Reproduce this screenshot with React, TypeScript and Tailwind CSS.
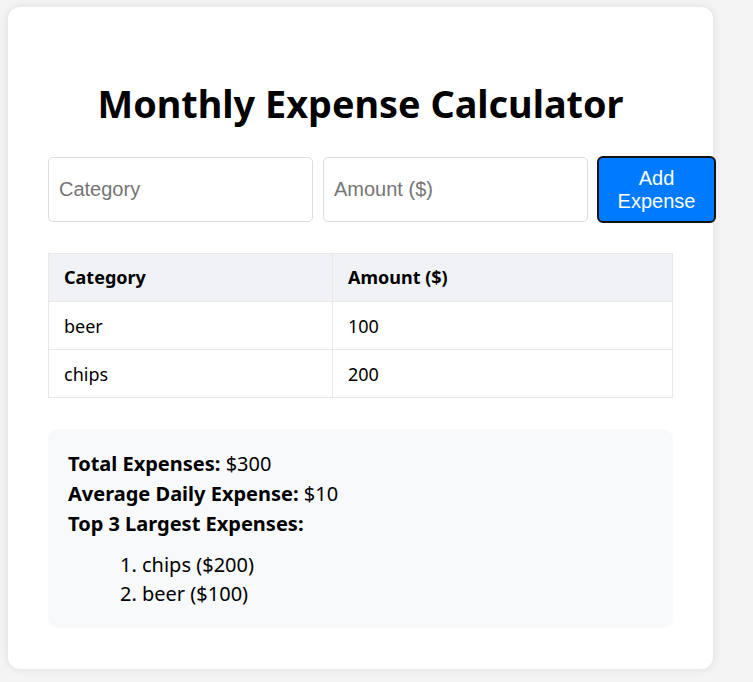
import { useState } from "react";

type Expense = { category: string; amount: number };

const font = { fontFamily: '"Noto Sans", "Open Sans", sans-serif' };

export default function App() {
  const [expenses] = useState<Expense[]>([
    { category: "beer", amount: 100 },
    { category: "chips", amount: 200 },
  ]);
  const total = expenses.reduce((s, e) => s + e.amount, 0);
  const top = [...expenses].sort((a, b) => b.amount - a.amount).slice(0, 3);

  return (
    <div className="min-h-[682px] bg-[#f4f4f4] pl-2 pt-[7px]">
      <div
        className="w-[705px] rounded-xl bg-white px-10 pb-[41px] pt-[40px] text-black shadow-[0_0_10px_rgba(0,0,0,0.1)]"
        style={font}
      >
        <h1 className="mt-[29px] text-center text-[37.8px] font-bold leading-[56px]">
          Monthly Expense Calculator
        </h1>
        <div className="mt-[24px] flex items-center">
          <input
            placeholder="Category"
            className="h-[65px] w-[265px] shrink-0 rounded-[5px] border border-[#dddddd] px-[10px] text-[20px] placeholder:text-[#757575] font-['Liberation_Sans',Arial,sans-serif]"
          />
          <input
            placeholder="Amount ($)"
            className="ml-[10px] h-[65px] w-[265px] shrink-0 rounded-[5px] border border-[#dddddd] px-[10px] text-[20px] placeholder:text-[#757575] font-['Liberation_Sans',Arial,sans-serif]"
          />
          <button className="ml-[9px] h-[67px] w-[119px] shrink-0 rounded-[6px] border-2 border-[#111111] bg-[#007bff] text-[20px] leading-[23px] text-white font-['Liberation_Sans',Arial,sans-serif]">
            Add
            <br />
            Expense
          </button>
        </div>

        <table className="mt-[30px] w-[625px] border-collapse text-[18px]">
          <thead>
            <tr className="bg-[#f0f2f5]">
              <th className="h-[48px] w-[284px] border border-[#e8e8e8] px-[15px] text-left font-bold">
                Category
              </th>
              <th className="h-[48px] border border-[#e8e8e8] px-[15px] text-left font-bold">
                Amount ($)
              </th>
            </tr>
          </thead>
          <tbody>
            {expenses.map((e) => (
              <tr key={e.category}>
                <td className="h-[48px] border border-[#e8e8e8] px-[15px] pt-[2px]">{e.category}</td>
                <td className="h-[48px] border border-[#e8e8e8] px-[15px] pt-[2px]">{e.amount}</td>
              </tr>
            ))}
          </tbody>
        </table>

        <div className="mt-[31px] rounded-[10px] bg-[#f8f9fa] px-5 pb-[20px] pt-[20px] text-[20px] leading-[30px]">
          <p>
            <strong>Total Expenses:</strong> ${total}
          </p>
          <p>
            <strong>Average Daily Expense:</strong> ${Math.round(total / 30)}
          </p>
          <p>
            <strong>Top 3 Largest Expenses:</strong>
          </p>
          <ol className="mt-[11px] list-decimal pl-[74px] leading-[29px]">
            {top.map((e) => (
              <li key={e.category}>
                {e.category} (${e.amount})
              </li>
            ))}
          </ol>
        </div>
      </div>
    </div>
  );
}
